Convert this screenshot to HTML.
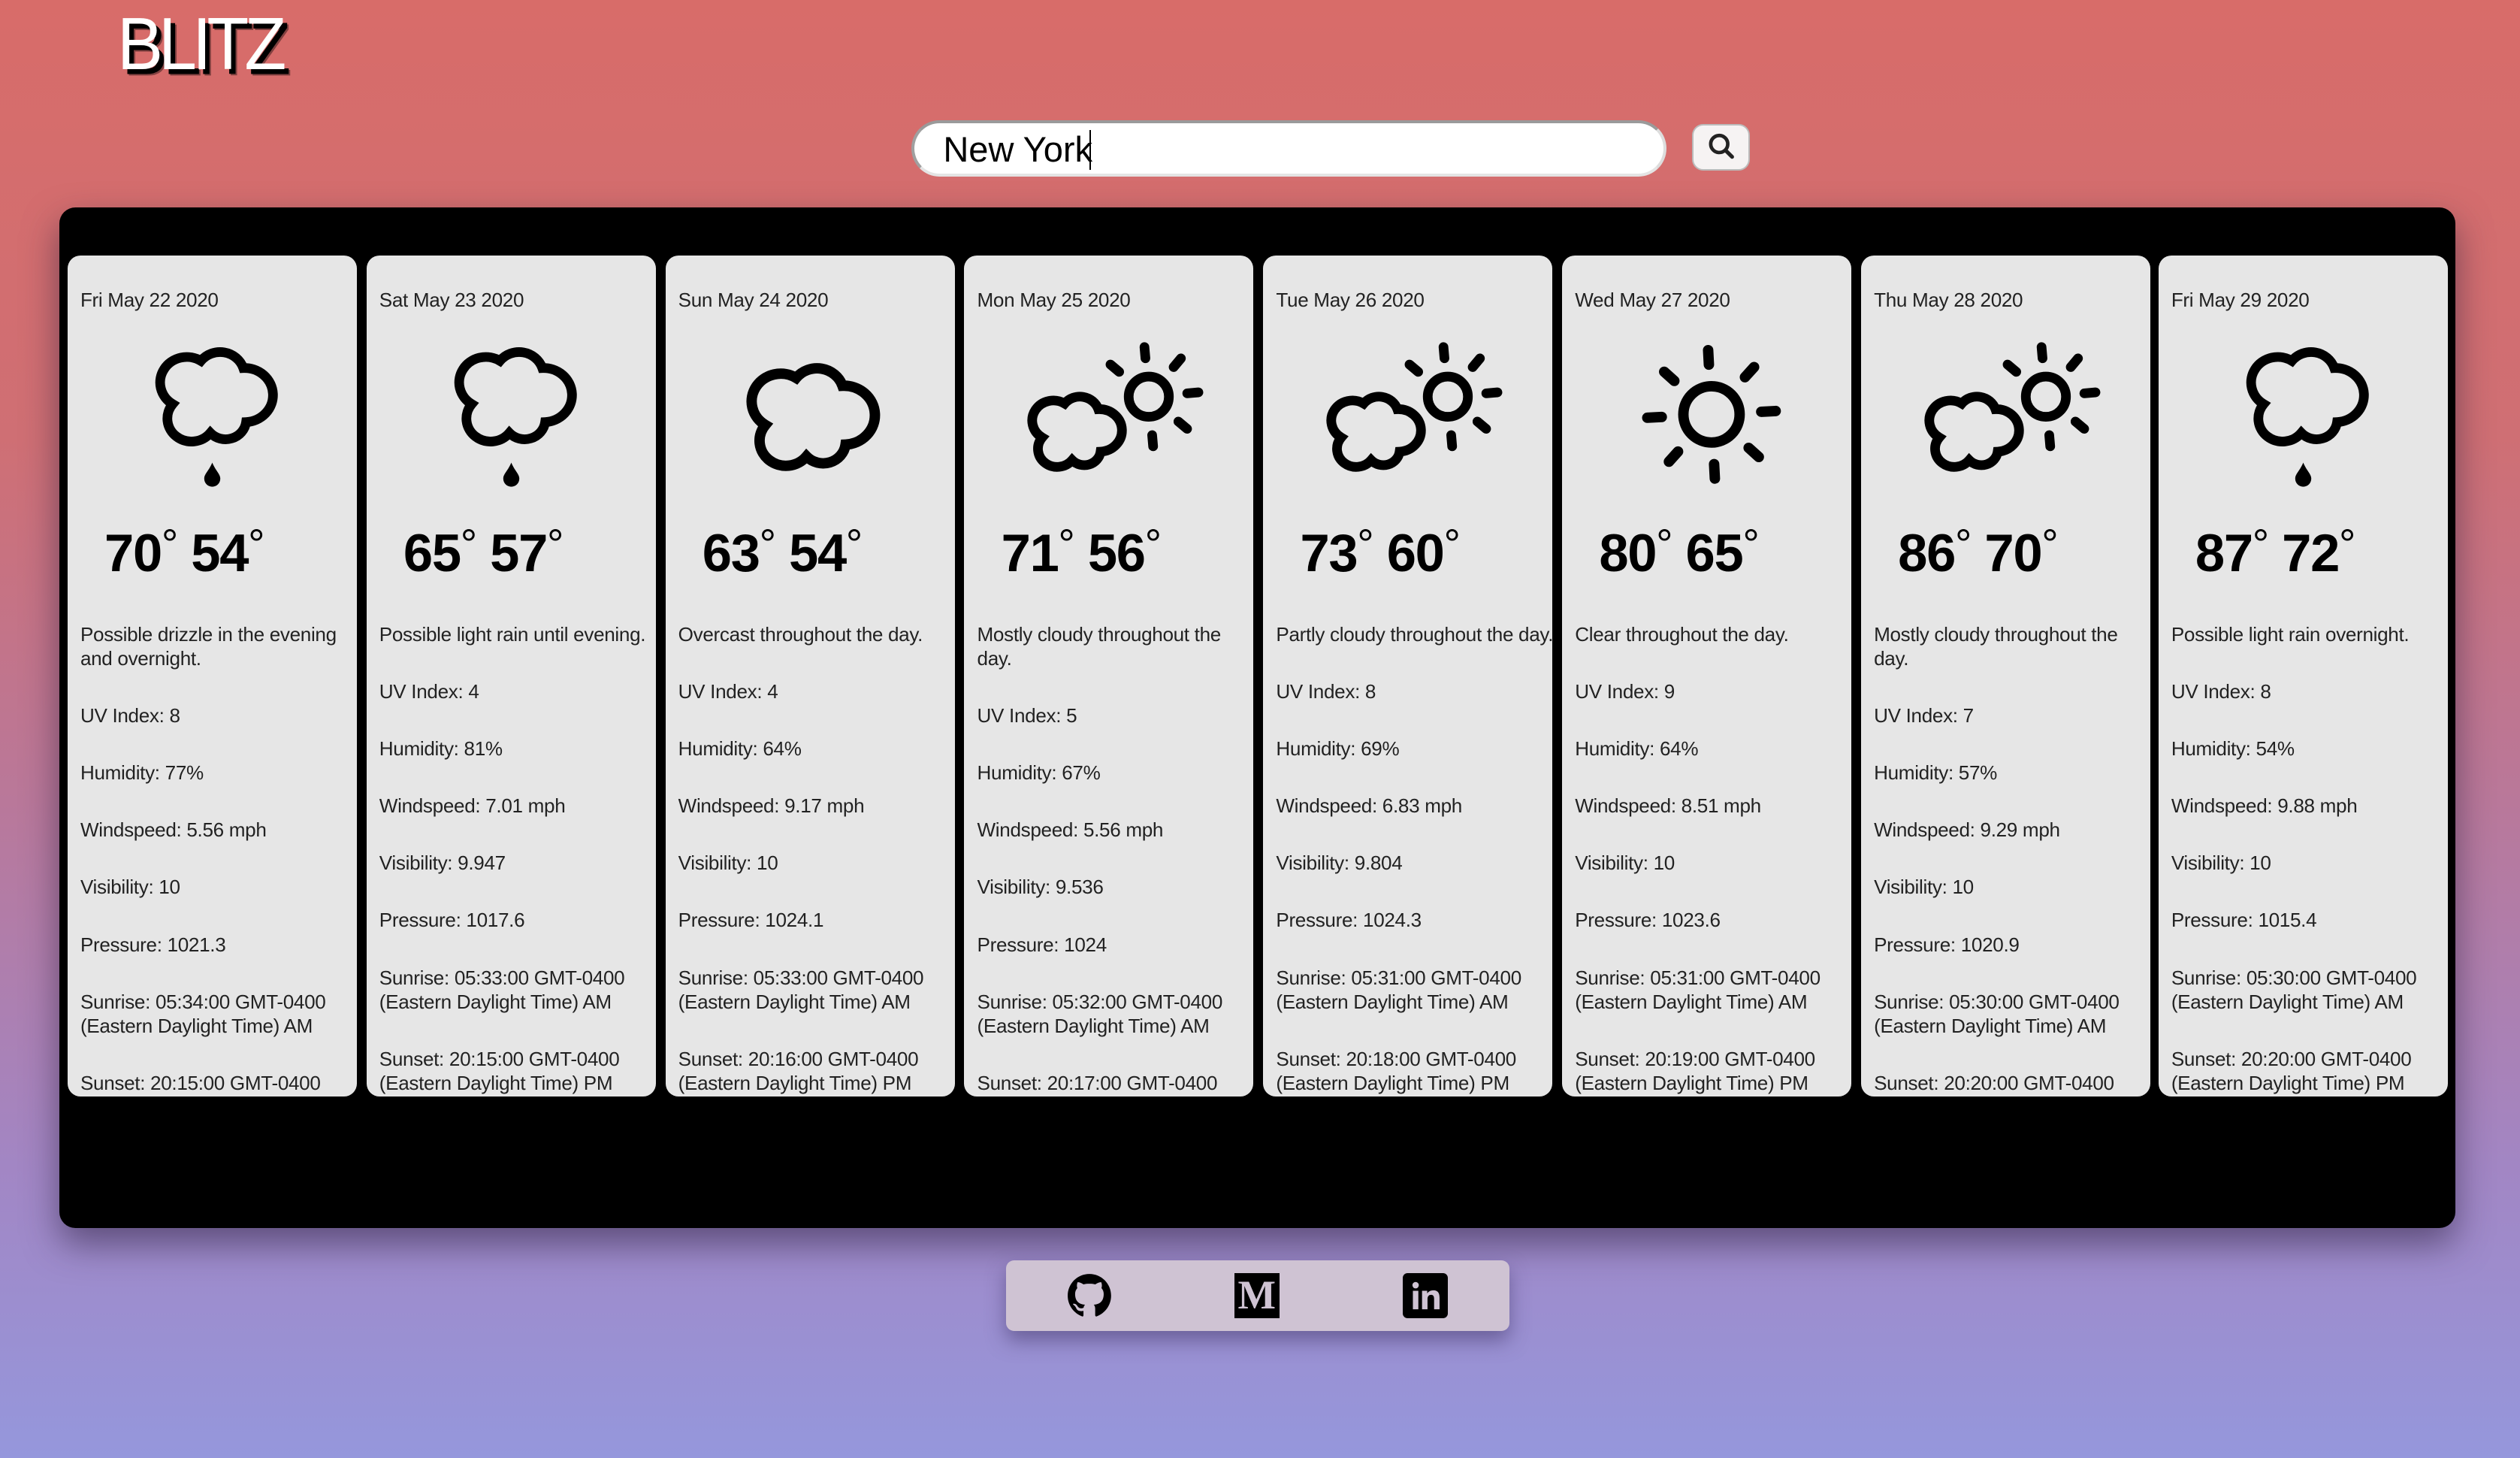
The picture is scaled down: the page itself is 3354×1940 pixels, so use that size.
<!DOCTYPE html>
<html><head><meta charset="utf-8">
<style>
html,body{margin:0;padding:0}
body{width:1568px;height:907px;zoom:2.13903;overflow:hidden;position:relative;
background:linear-gradient(180deg,#d86c69 0%,#cf6f74 30%,#b9789a 55%,#a286c4 80%,#9597dc 100%);
font-family:"Liberation Sans",Helvetica,Arial,sans-serif}
.logo{position:absolute;left:73px;top:1px;font-size:46px;color:#fff;letter-spacing:-3px;
text-shadow:3px 3px 0 #000, 4px 4px 0 rgba(0,0,0,.4);transform:scaleX(.93);transform-origin:left}
.search{position:absolute;left:567px;top:75px;width:470px;height:35px;background:#fff;border-radius:18px;
border-top:2px solid #9a9a9a;border-left:2px solid #a0a0a0;border-right:2px solid #ddd;border-bottom:2px solid #e4e4e4;box-sizing:border-box}
.search span{position:absolute;left:18px;top:3px;font-size:22px;color:#000}
.search i{position:absolute;left:109px;top:4px;width:1px;height:25px;background:#000}
.btn{position:absolute;left:1053px;top:77px;width:36px;height:29px;background:#f6f3f3;border-radius:7px;border:1px solid #bbb;box-sizing:border-box}
.panel{position:absolute;left:37px;top:129px;width:1491px;height:635px;background:#000;border-radius:10px;box-shadow:0 10px 22px rgba(40,30,60,.55)}
.card{position:absolute;top:159px;width:180px;height:523px;background:#e6e6e6;border-radius:8px;overflow:hidden;color:#222;font-size:12.2px;letter-spacing:-.15px}
.date{position:absolute;left:8px;top:20px;line-height:15px}
.card svg{position:absolute;left:0;top:46px}
.temp{position:absolute;left:23px;top:165px;font-size:33px;font-weight:bold;color:#000;line-height:40px;letter-spacing:-.6px;white-space:nowrap}
.temp sup{font-weight:normal;font-size:26px;vertical-align:0;position:relative;top:-8px;margin-left:0}
.info{position:absolute;left:8px;top:228px;width:175px;white-space:nowrap}
.info p{margin:0 0 20.6px;line-height:15px}
.foot{position:absolute;left:626px;top:784px;width:313px;height:44px;background:#cfc3d3;border-radius:5px;box-shadow:0 6px 12px rgba(60,50,100,.5)}
</style></head><body>
<div class="logo">BLITZ</div>
<div class="search"><span>New York</span><i></i></div>
<div class="btn"><svg width="36" height="29" viewBox="0 0 36 29"><circle cx="16" cy="11.5" r="5.3" fill="none" stroke="#222" stroke-width="2.2"/><line x1="20" y1="15.5" x2="24" y2="19.5" stroke="#222" stroke-width="2.4" stroke-linecap="round"/></svg></div>
<div class="panel"></div>

<!-- card 1 -->
<div class="card" style="left:42px">
<div class="date">Fri May 22 2020</div>
<svg width="180" height="110" viewBox="0 0 180 110"><g transform="translate(59.5,13) scale(0.586,0.56)"><path d="M10,60 A22,22 0 0 1 40,12 A26,26 0 0 1 85,20 A25,25 0 0 1 88,80 A22,22 0 0 1 50,92 A22,22 0 0 1 10,60 Z" fill="none" stroke="#000" stroke-width="6" vector-effect="non-scaling-stroke"/></g><path d="M90,83 C88,88 85,90 85,93 a5,5 0 0 0 10,0 C95,90 92,88 90,83Z" fill="#000"/></svg>
<div class="temp">70<sup>°</sup> 54<sup>°</sup></div>
<div class="info"><p>Possible drizzle in the evening<br>and overnight.</p><p>UV Index: 8</p><p>Humidity: 77%</p><p>Windspeed: 5.56 mph</p><p>Visibility: 10</p><p>Pressure: 1021.3</p><p>Sunrise: 05:34:00 GMT-0400<br>(Eastern Daylight Time) AM</p><p>Sunset: 20:15:00 GMT-0400<br>(Eastern Daylight Time) PM</p></div>
</div>

<!-- card 2 -->
<div class="card" style="left:228px">
<div class="date">Sat May 23 2020</div>
<svg width="180" height="110" viewBox="0 0 180 110"><g transform="translate(59.5,13) scale(0.586,0.56)"><path d="M10,60 A22,22 0 0 1 40,12 A26,26 0 0 1 85,20 A25,25 0 0 1 88,80 A22,22 0 0 1 50,92 A22,22 0 0 1 10,60 Z" fill="none" stroke="#000" stroke-width="6" vector-effect="non-scaling-stroke"/></g><path d="M90,83 C88,88 85,90 85,93 a5,5 0 0 0 10,0 C95,90 92,88 90,83Z" fill="#000"/></svg>
<div class="temp">65<sup>°</sup> 57<sup>°</sup></div>
<div class="info"><p>Possible light rain until evening.</p><p>UV Index: 4</p><p>Humidity: 81%</p><p>Windspeed: 7.01 mph</p><p>Visibility: 9.947</p><p>Pressure: 1017.6</p><p>Sunrise: 05:33:00 GMT-0400<br>(Eastern Daylight Time) AM</p><p>Sunset: 20:15:00 GMT-0400<br>(Eastern Daylight Time) PM</p></div>
</div>

<!-- card 3 -->
<div class="card" style="left:414px">
<div class="date">Sun May 24 2020</div>
<svg width="180" height="110" viewBox="0 0 180 110"><g transform="translate(55.6,23) scale(0.64,0.61)"><path d="M10,60 A22,22 0 0 1 40,12 A26,26 0 0 1 85,20 A25,25 0 0 1 88,80 A22,22 0 0 1 50,92 A22,22 0 0 1 10,60 Z" fill="none" stroke="#000" stroke-width="6.5" vector-effect="non-scaling-stroke"/></g></svg>
<div class="temp">63<sup>°</sup> 54<sup>°</sup></div>
<div class="info"><p>Overcast throughout the day.</p><p>UV Index: 4</p><p>Humidity: 64%</p><p>Windspeed: 9.17 mph</p><p>Visibility: 10</p><p>Pressure: 1024.1</p><p>Sunrise: 05:33:00 GMT-0400<br>(Eastern Daylight Time) AM</p><p>Sunset: 20:16:00 GMT-0400<br>(Eastern Daylight Time) PM</p></div>
</div>

<!-- card 4 -->
<div class="card" style="left:600px">
<div class="date">Mon May 25 2020</div>
<svg width="180" height="110" viewBox="0 0 180 110"><g fill="none" stroke="#000" stroke-width="6" stroke-linecap="round"><circle cx="115" cy="42" r="12.5"/><g transform="translate(115,42) rotate(-5)"><line x1="0" y1="-24" x2="0" y2="-31"/><line x1="0" y1="24" x2="0" y2="31"/><line x1="24" y1="0" x2="31" y2="0"/><line x1="17" y1="-17" x2="22" y2="-22"/><line x1="17" y1="17" x2="22" y2="22"/><line x1="-17" y1="-17" x2="-22" y2="-22"/></g></g><g transform="translate(44,41) scale(0.466,0.44)"><path d="M10,60 A22,22 0 0 1 40,12 A26,26 0 0 1 85,20 A25,25 0 0 1 88,80 A22,22 0 0 1 50,92 A22,22 0 0 1 10,60 Z" fill="#e6e6e6" stroke="#000" stroke-width="6" vector-effect="non-scaling-stroke"/></g></svg>
<div class="temp">71<sup>°</sup> 56<sup>°</sup></div>
<div class="info"><p>Mostly cloudy throughout the<br>day.</p><p>UV Index: 5</p><p>Humidity: 67%</p><p>Windspeed: 5.56 mph</p><p>Visibility: 9.536</p><p>Pressure: 1024</p><p>Sunrise: 05:32:00 GMT-0400<br>(Eastern Daylight Time) AM</p><p>Sunset: 20:17:00 GMT-0400<br>(Eastern Daylight Time) PM</p></div>
</div>

<!-- card 5 -->
<div class="card" style="left:786px">
<div class="date">Tue May 26 2020</div>
<svg width="180" height="110" viewBox="0 0 180 110"><g fill="none" stroke="#000" stroke-width="6" stroke-linecap="round"><circle cx="115" cy="42" r="12.5"/><g transform="translate(115,42) rotate(-5)"><line x1="0" y1="-24" x2="0" y2="-31"/><line x1="0" y1="24" x2="0" y2="31"/><line x1="24" y1="0" x2="31" y2="0"/><line x1="17" y1="-17" x2="22" y2="-22"/><line x1="17" y1="17" x2="22" y2="22"/><line x1="-17" y1="-17" x2="-22" y2="-22"/></g></g><g transform="translate(44,41) scale(0.466,0.44)"><path d="M10,60 A22,22 0 0 1 40,12 A26,26 0 0 1 85,20 A25,25 0 0 1 88,80 A22,22 0 0 1 50,92 A22,22 0 0 1 10,60 Z" fill="#e6e6e6" stroke="#000" stroke-width="6" vector-effect="non-scaling-stroke"/></g></svg>
<div class="temp">73<sup>°</sup> 60<sup>°</sup></div>
<div class="info"><p>Partly cloudy throughout the day.</p><p>UV Index: 8</p><p>Humidity: 69%</p><p>Windspeed: 6.83 mph</p><p>Visibility: 9.804</p><p>Pressure: 1024.3</p><p>Sunrise: 05:31:00 GMT-0400<br>(Eastern Daylight Time) AM</p><p>Sunset: 20:18:00 GMT-0400<br>(Eastern Daylight Time) PM</p></div>
</div>

<!-- card 6 -->
<div class="card" style="left:972px">
<div class="date">Wed May 27 2020</div>
<svg width="180" height="110" viewBox="0 0 180 110"><g fill="none" stroke="#000" stroke-width="6.5" stroke-linecap="round"><circle cx="93" cy="53" r="17.5"/><g transform="translate(93,53) rotate(-3)"><line x1="0" y1="-31" x2="0" y2="-40"/><line x1="0" y1="31" x2="0" y2="40"/><line x1="31" y1="0" x2="40" y2="0"/><line x1="-31" y1="0" x2="-40" y2="0"/><line x1="22" y1="-22" x2="28" y2="-28"/><line x1="22" y1="22" x2="28" y2="28"/><line x1="-22" y1="-22" x2="-28" y2="-28"/><line x1="-22" y1="22" x2="-28" y2="28"/></g></g></svg>
<div class="temp">80<sup>°</sup> 65<sup>°</sup></div>
<div class="info"><p>Clear throughout the day.</p><p>UV Index: 9</p><p>Humidity: 64%</p><p>Windspeed: 8.51 mph</p><p>Visibility: 10</p><p>Pressure: 1023.6</p><p>Sunrise: 05:31:00 GMT-0400<br>(Eastern Daylight Time) AM</p><p>Sunset: 20:19:00 GMT-0400<br>(Eastern Daylight Time) PM</p></div>
</div>

<!-- card 7 -->
<div class="card" style="left:1158px">
<div class="date">Thu May 28 2020</div>
<svg width="180" height="110" viewBox="0 0 180 110"><g fill="none" stroke="#000" stroke-width="6" stroke-linecap="round"><circle cx="115" cy="42" r="12.5"/><g transform="translate(115,42) rotate(-5)"><line x1="0" y1="-24" x2="0" y2="-31"/><line x1="0" y1="24" x2="0" y2="31"/><line x1="24" y1="0" x2="31" y2="0"/><line x1="17" y1="-17" x2="22" y2="-22"/><line x1="17" y1="17" x2="22" y2="22"/><line x1="-17" y1="-17" x2="-22" y2="-22"/></g></g><g transform="translate(44,41) scale(0.466,0.44)"><path d="M10,60 A22,22 0 0 1 40,12 A26,26 0 0 1 85,20 A25,25 0 0 1 88,80 A22,22 0 0 1 50,92 A22,22 0 0 1 10,60 Z" fill="#e6e6e6" stroke="#000" stroke-width="6" vector-effect="non-scaling-stroke"/></g></svg>
<div class="temp">86<sup>°</sup> 70<sup>°</sup></div>
<div class="info"><p>Mostly cloudy throughout the<br>day.</p><p>UV Index: 7</p><p>Humidity: 57%</p><p>Windspeed: 9.29 mph</p><p>Visibility: 10</p><p>Pressure: 1020.9</p><p>Sunrise: 05:30:00 GMT-0400<br>(Eastern Daylight Time) AM</p><p>Sunset: 20:20:00 GMT-0400<br>(Eastern Daylight Time) PM</p></div>
</div>

<!-- card 8 -->
<div class="card" style="left:1343px">
<div class="date">Fri May 29 2020</div>
<svg width="180" height="110" viewBox="0 0 180 110"><g transform="translate(59.5,13) scale(0.586,0.56)"><path d="M10,60 A22,22 0 0 1 40,12 A26,26 0 0 1 85,20 A25,25 0 0 1 88,80 A22,22 0 0 1 50,92 A22,22 0 0 1 10,60 Z" fill="none" stroke="#000" stroke-width="6" vector-effect="non-scaling-stroke"/></g><path d="M90,83 C88,88 85,90 85,93 a5,5 0 0 0 10,0 C95,90 92,88 90,83Z" fill="#000"/></svg>
<div class="temp">87<sup>°</sup> 72<sup>°</sup></div>
<div class="info"><p>Possible light rain overnight.</p><p>UV Index: 8</p><p>Humidity: 54%</p><p>Windspeed: 9.88 mph</p><p>Visibility: 10</p><p>Pressure: 1015.4</p><p>Sunrise: 05:30:00 GMT-0400<br>(Eastern Daylight Time) AM</p><p>Sunset: 20:20:00 GMT-0400<br>(Eastern Daylight Time) PM</p></div>
</div>

<div class="foot">
<svg style="position:absolute;left:38px;top:8px" width="28" height="29" viewBox="0 0 28 29"><path fill="#000" fill-rule="evenodd" d="M14,0.5 C6.5,0.5 0.5,6.5 0.5,14 C0.5,20 4.3,25 9.7,27 C10.2,27 10.3,26.5 10.3,26.2 L10.3,23.5 C6.5,24.3 5.8,21.8 5.8,21.8 C5.2,20.3 4.3,19.9 4.3,19.9 C3.1,19 4.4,19 4.4,19 C5.8,19.1 6.5,20.4 6.5,20.4 C7.7,22.5 9.7,21.9 10.4,21.5 C10.5,20.6 10.9,20 11.3,19.7 C8.3,19.4 5.1,18.2 5.1,13 C5.1,11.5 5.6,10.3 6.5,9.3 C6.4,9 5.9,7.6 6.6,5.7 C6.6,5.7 7.8,5.3 10.3,7 C11.4,6.7 12.7,6.6 14,6.6 C15.3,6.6 16.6,6.7 17.7,7 C20.2,5.3 21.4,5.7 21.4,5.7 C22.1,7.6 21.6,9 21.5,9.3 C22.4,10.3 22.9,11.5 22.9,13 C22.9,18.2 19.7,19.4 16.7,19.7 C17.2,20.1 17.6,20.9 17.6,22.2 L17.6,26.2 C17.6,26.5 17.8,27 18.3,27 C23.7,25 27.5,20 27.5,14 C27.5,6.5 21.5,0.5 14,0.5 Z"/></svg>
<div style="position:absolute;left:142px;top:8px;width:28px;height:28px;background:#000;color:#cfc3d3;font-family:'Liberation Serif',serif;font-weight:bold;font-size:25px;line-height:28px;text-align:center">M</div>
<div style="position:absolute;left:247px;top:8px;width:28px;height:28px;background:#000;border-radius:3px">
<svg width="28" height="28" viewBox="0 0 28 28"><circle cx="8" cy="7.5" r="2" fill="#cfc3d3"/><rect x="6.3" y="11" width="3.4" height="11.5" fill="#cfc3d3"/><path d="M12,11 h3.2 v1.7 c0.6,-1.1 2,-2 3.8,-2 c3,0 3.9,1.9 3.9,4.6 v7.2 h-3.4 v-6.4 c0,-1.5 -0.4,-2.6 -1.9,-2.6 c-1.5,0 -2.2,1.1 -2.2,2.6 v6.4 h-3.4 Z" fill="#cfc3d3"/></svg></div>
</div>
</body></html>
